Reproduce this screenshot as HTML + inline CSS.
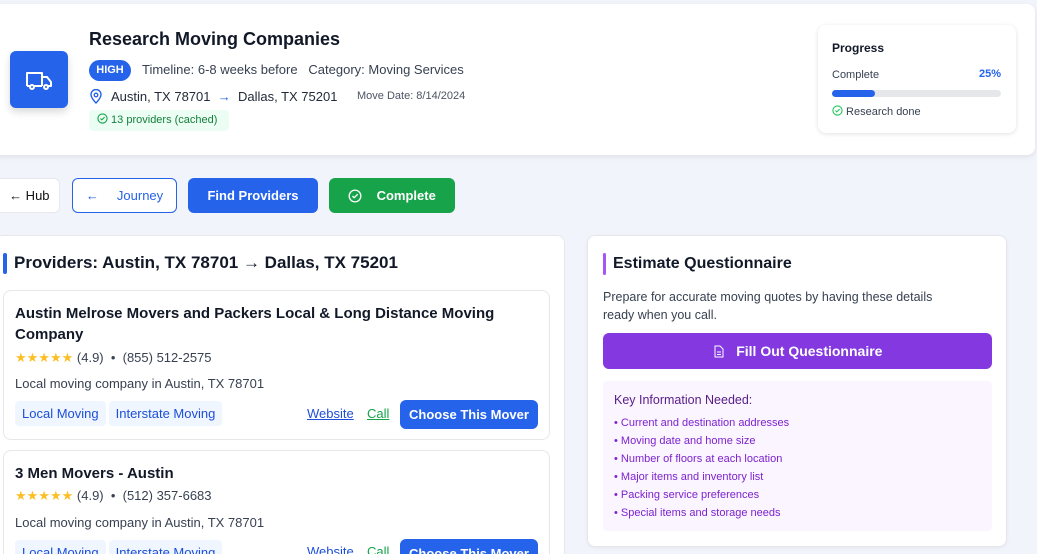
<!DOCTYPE html>
<html><head><meta charset="utf-8"><style>
*{box-sizing:border-box;margin:0;padding:0}
html,body{width:1037px;height:554px;overflow:hidden}
body{background:#f1f5fb;font-family:"Liberation Sans",sans-serif;position:relative;color:#111827}
.a{position:absolute}
.card{background:#fff;border:1px solid #e5e7eb;border-radius:8px}
.btn{position:absolute;border-radius:6px;display:flex;align-items:center;justify-content:center;font-size:13px;font-weight:bold}
.tag{display:inline-block;background:#eff6ff;color:#1d4ed8;font-size:13px;padding:5px 7px;border-radius:4px;margin-right:3px}
.star{color:#fbbf24;font-size:13px;letter-spacing:0px}
li{list-style:none;font-size:11px;color:#7e22ce;height:18px}
</style></head><body>
<div class="a" style="left:-10px;top:4px;width:1045px;height:151px;background:#fff;border-radius:8px;box-shadow:0 2px 6px rgba(0,0,0,.08)"></div>
<div class="a" style="left:10px;top:51px;width:58px;height:57px;background:#2563eb;border-radius:6px;box-shadow:0 4px 8px rgba(0,0,0,.15)">
<svg width="58" height="57" viewBox="0 0 58 57"><g fill="none" stroke="#fff" stroke-width="2" stroke-linejoin="round"><path d="M17 35V22h15v13M32 26h5l4 5v4h-3M20 35h-3M24 35h8"/><circle cx="22" cy="36" r="2"/><circle cx="36" cy="36" r="2"/></g></svg></div>
<div class="a" style="left:89px;top:29px;font-size:18px;font-weight:bold">Research Moving Companies</div>
<div class="a" style="left:89px;top:60px;width:42px;height:21px;background:#2563eb;color:#fff;border-radius:11px;font-size:11px;font-weight:bold;text-align:center;line-height:21px">HIGH</div>
<div class="a" style="left:142px;top:62px;font-size:13px;color:#374151">Timeline: 6-8 weeks before &nbsp;&nbsp;Category: Moving Services</div>
<svg class="a" style="left:89px;top:89px" width="14" height="15" viewBox="0 0 14 15"><path d="M7 14s5-5 5-8.5A5 5 0 0 0 2 5.5C2 9 7 14 7 14z" fill="none" stroke="#2563eb" stroke-width="1.4"/><circle cx="7" cy="6" r="1.8" fill="none" stroke="#2563eb" stroke-width="1.3"/></svg>
<div class="a" style="left:111px;top:89px;font-size:13px;color:#1f2937">Austin, TX 78701 <span style="color:#2563eb">&nbsp;→&nbsp;</span> Dallas, TX 75201</div>
<div class="a" style="left:357px;top:90px;font-size:11px;color:#4b5563">Move Date: 8/14/2024</div>
<div class="a" style="left:89px;top:110px;width:140px;height:21px;background:#ecfdf3;border-radius:4px;color:#15803d;font-size:11px;line-height:21px;padding-left:8px"><svg width="11" height="11" viewBox="0 0 12 12" style="vertical-align:-1px"><circle cx="6" cy="6" r="5" fill="none" stroke="#16a34a" stroke-width="1.2"/><path d="M3.8 6l1.5 1.5L8.3 4.5" fill="none" stroke="#16a34a" stroke-width="1.2"/></svg> 13 providers (cached)</div>
<div class="a card" style="left:818px;top:25px;width:198px;height:108px;border:none;box-shadow:0 1px 5px rgba(0,0,0,.12)">
<div class="a" style="left:14px;top:16px;font-size:12px;font-weight:bold">Progress</div>
<div class="a" style="left:14px;top:44px;font-size:11px;color:#374151">Complete</div>
<div class="a" style="right:15px;top:43px;font-size:11px;font-weight:bold;color:#2563eb">25%</div>
<div class="a" style="left:14px;top:65px;width:169px;height:7px;background:#e5e7eb;border-radius:4px"><div style="width:43px;height:7px;background:#2563eb;border-radius:4px"></div></div>
<div class="a" style="left:14px;top:80px;font-size:11px;color:#374151"><svg width="11" height="11" viewBox="0 0 12 12" style="vertical-align:-1px"><circle cx="6" cy="6" r="5" fill="none" stroke="#22c55e" stroke-width="1.2"/><path d="M3.8 6l1.5 1.5L8.3 4.5" fill="none" stroke="#22c55e" stroke-width="1.2"/></svg> Research done</div>
</div>
<div class="btn" style="left:-5px;top:178px;width:65px;height:35px;background:#fff;border:1px solid #e5e7eb;color:#111;font-weight:normal">&nbsp;←&nbsp;Hub</div>
<div class="btn" style="left:72px;top:178px;width:105px;height:35px;background:#fff;border:1px solid #2563eb;color:#2563eb;font-weight:normal">←&nbsp;&nbsp;&nbsp;&nbsp;&nbsp;Journey</div>
<div class="btn" style="left:188px;top:178px;width:130px;height:35px;background:#2563eb;color:#fff">Find Providers</div>
<div class="btn" style="left:329px;top:178px;width:126px;height:35px;background:#16a34a;color:#fff"><svg width="14" height="14" viewBox="0 0 12 12"><circle cx="6" cy="6" r="5" fill="none" stroke="#fff" stroke-width="1.1"/><path d="M3.8 6l1.5 1.5L8.3 4.5" fill="none" stroke="#fff" stroke-width="1.1"/></svg>&nbsp;&nbsp;&nbsp;&nbsp;Complete</div>
<div class="a card" style="left:-5px;top:235px;width:570px;height:330px"></div>
<div class="a" style="left:3px;top:253px;width:4px;height:21px;background:#2563eb;border-radius:2px"></div>
<div class="a" style="left:14px;top:253px;font-size:17px;font-weight:bold">Providers: Austin, TX 78701 → Dallas, TX 75201</div>
<div class="a card" style="left:3px;top:290px;width:547px;height:150px">
<div class="a" style="left:11px;top:12px;width:500px;font-size:15px;font-weight:bold;line-height:21px">Austin Melrose Movers and Packers Local &amp; Long Distance Moving Company</div>
<div class="a" style="left:11px;top:59px;font-size:13px;color:#374151"><span class="star">★★★★★</span> (4.9) &nbsp;•&nbsp; (855) 512-2575</div>
<div class="a" style="left:11px;top:85px;font-size:13px;color:#374151">Local moving company in Austin, TX 78701</div>
<div class="a" style="left:11px;top:110px"><span class="tag">Local Moving</span><span class="tag">Interstate Moving</span></div>
<div class="a" style="left:303px;top:115px;font-size:13px;color:#1d4ed8;text-decoration:underline">Website</div>
<div class="a" style="left:363px;top:115px;font-size:13px;color:#16a34a;text-decoration:underline">Call</div>
<div class="btn" style="left:396px;top:109px;width:138px;height:29px;background:#2563eb;color:#fff">Choose This Mover</div>
</div>
<div class="a card" style="left:3px;top:450px;width:547px;height:104px;border-bottom:none;border-radius:8px 8px 0 0">
<div class="a" style="left:11px;top:12px;font-size:15px;font-weight:bold;line-height:21px">3 Men Movers - Austin</div>
<div class="a" style="left:11px;top:37px;font-size:13px;color:#374151"><span class="star">★★★★★</span> (4.9) &nbsp;•&nbsp; (512) 357-6683</div>
<div class="a" style="left:11px;top:64px;font-size:13px;color:#374151">Local moving company in Austin, TX 78701</div>
<div class="a" style="left:11px;top:89px"><span class="tag">Local Moving</span><span class="tag">Interstate Moving</span></div>
<div class="a" style="left:303px;top:93px;font-size:13px;color:#1d4ed8;text-decoration:underline">Website</div>
<div class="a" style="left:363px;top:93px;font-size:13px;color:#16a34a;text-decoration:underline">Call</div>
<div class="btn" style="left:396px;top:88px;width:138px;height:29px;background:#2563eb;color:#fff">Choose This Mover</div>
</div>
<div class="a card" style="left:587px;top:235px;width:420px;height:312px;box-shadow:0 1px 3px rgba(0,0,0,.06)">
<div class="a" style="left:15px;top:17px;width:3px;height:22px;background:#a855f7;border-radius:2px"></div>
<div class="a" style="left:25px;top:19px;font-size:16px;font-weight:bold">Estimate Questionnaire</div>
<div class="a" style="left:15px;top:52px;width:345px;font-size:12.5px;line-height:18px;color:#374151">Prepare for accurate moving quotes by having these details ready when you call.</div>
<div class="btn" style="left:15px;top:97px;width:389px;height:36px;background:#8338e0;color:#fff;font-size:14px"><svg width="12" height="13" viewBox="0 0 12 13"><path d="M2 1h5l3 3v8H2z M4 7h4M4 9.5h4" fill="none" stroke="#fff" stroke-width="1"/></svg>&nbsp;&nbsp;&nbsp;Fill Out Questionnaire</div>
<div class="a" style="left:15px;top:145px;width:389px;height:150px;background:#faf5ff;border-radius:4px;padding:12px 0 0 11px">
<div style="font-size:12.5px;color:#581c87;margin-bottom:10px">Key Information Needed:</div>
<ul><li>• Current and destination addresses</li><li>• Moving date and home size</li><li>• Number of floors at each location</li><li>• Major items and inventory list</li><li>• Packing service preferences</li><li>• Special items and storage needs</li></ul>
</div></div>
</body></html>
